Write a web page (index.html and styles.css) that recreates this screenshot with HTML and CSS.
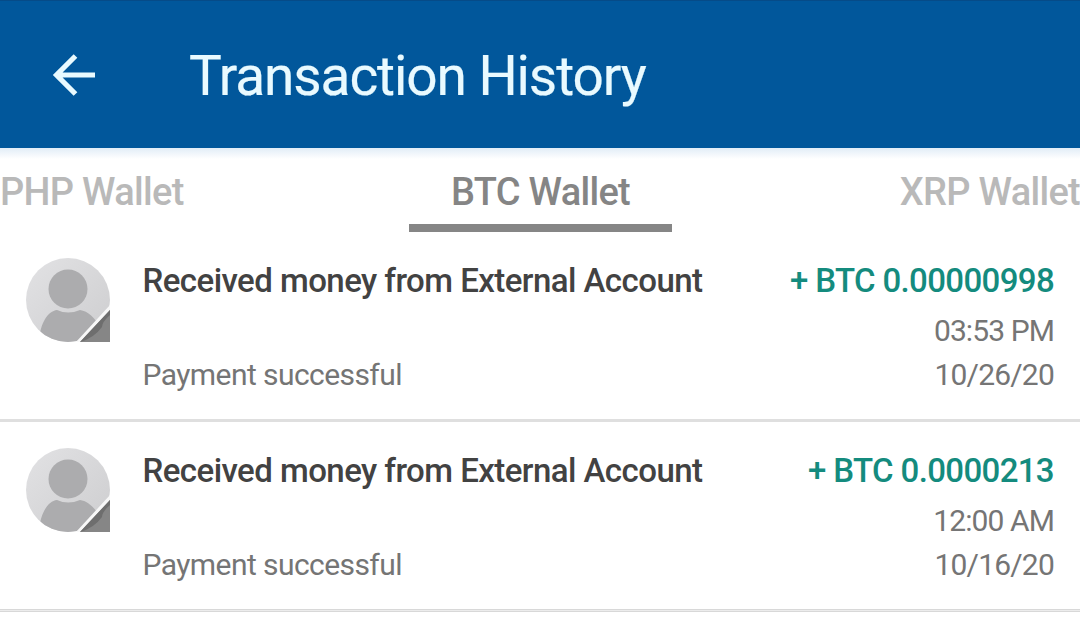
FILE: index.html
```html
<!DOCTYPE html>
<html lang="en">
<head>
<meta charset="utf-8">
<title>Transaction History</title>
<link rel="stylesheet" href="styles.css">
</head>
<body>
<header class="appbar">
  <svg class="back" viewBox="0 0 44 42" width="44" height="42"><path d="M43 21H6M23.500 2L4.500 21L23.500 40" fill="none" stroke="#e9faff" stroke-width="5.200"/></svg>
  <h1 class="title">Transaction History</h1>
</header>
<nav class="tabs">
  <a class="tab tab-left">PHP Wallet</a>
  <a class="tab tab-active">BTC Wallet</a>
  <a class="tab tab-right">XRP Wallet</a>
</nav>
<main class="list">
  <article class="row">
    <svg class="avatar" viewBox="0 0 84 84" width="84" height="84">
      <defs>
        <linearGradient id="g" x1="0" y1="0" x2="1" y2="1"><stop offset="0" stop-color="#e2e2e4"/><stop offset="1" stop-color="#cdcdcf"/></linearGradient>
        <clipPath id="c"><circle cx="42" cy="42" r="42"/></clipPath>
      </defs>
      <g id="person"><circle cx="42" cy="42" r="42" fill="url(#g)"/>
      <g clip-path="url(#c)"><circle cx="42" cy="31" r="19.500" fill="#acacae"/><path d="M13 84C14 65 22 53 31 52Q42 57 54 52C62 53 69 60 74 69V84Z" fill="#acacae"/></g>
      <path d="M84 47V84H50Z" fill="#f8f8f8"/><path d="M84 52V84H54Z" fill="#868686"/><path d="M84 52L54 84Q68 80 76 69Q76 64 84 57Z" fill="#6e6e6e"/></g>
    </svg>
    <div class="details"><h2 class="name">Received money from External Account</h2><p class="status">Payment successful</p></div>
    <div class="figures"><strong class="amount">+ BTC 0.00000998</strong><span class="time">03:53 PM</span><span class="date">10/26/20</span></div>
  </article>
  <article class="row row-last">
    <svg class="avatar" viewBox="0 0 84 84" width="84" height="84"><use href="#person"/></svg>
    <div class="details"><h2 class="name">Received money from External Account</h2><p class="status">Payment successful</p></div>
    <div class="figures"><strong class="amount">+ BTC 0.0000213</strong><span class="time">12:00 AM</span><span class="date">10/16/20</span></div>
  </article>
</main>
</body>
</html>
```
FILE: styles.css
```css
* { box-sizing: border-box; }
body { margin: 0; height: 618px; overflow: hidden; background: #fff; font-family: Roboto, sans-serif; color: #757575; }
h1, h2, p { margin: 0; font-weight: 400; }
.appbar { height: 148px; background: #01579b; border-top: 1px solid #064b88; display: flex; align-items: center; padding: 2px 0 0 52px; }
.back { margin-bottom: 2px; }
.title { margin-left: 93px; color: #e9faff; font-size: 55px; line-height: 64px; letter-spacing: -1.09px; white-space: nowrap; -webkit-text-stroke: 0.2px #e9faff; }
.tabs { height: 84px; display: grid; grid-template-columns: 409px 263px 408px; background: linear-gradient(#e2edf7, #fff 11px); }
.tab { font-size: 38px; line-height: 44px; padding-top: 22px; font-weight: 500; letter-spacing: -0.7px; color: #b9b9b9; white-space: nowrap; }
.tab-active { color: #858585; text-align: center; border-bottom: 8px solid #868686; }
.tab-right { text-align: right; }
.row { height: 190px; display: flex; padding: 27px 26px 0; border-bottom: 3px solid #dfdfdf; }
.row-last { border-bottom-style: double; border-bottom-color: #d8d8d8; background: #f0f0f0; background: linear-gradient(#fff 187px, #ececec 187px) border-box; }
.avatar { flex: none; margin-top: -1px; }
.details { flex: 1; margin-left: 32.5px; white-space: nowrap; }
.name { font-size: 33px; line-height: 44px; font-weight: 500; letter-spacing: -0.55px; color: #424242; }
.status { font-size: 30px; line-height: 44px; margin-top: 50px; letter-spacing: -0.57px; }
.figures { display: flex; flex-direction: column; align-items: flex-end; font-size: 30px; line-height: 44px; letter-spacing: -0.8px; white-space: nowrap; }
.amount { font-size: 33px; font-weight: 500; letter-spacing: -0.64px; color: #148b7e; }
.time { margin-top: 6px; letter-spacing: -0.9px; }
```
